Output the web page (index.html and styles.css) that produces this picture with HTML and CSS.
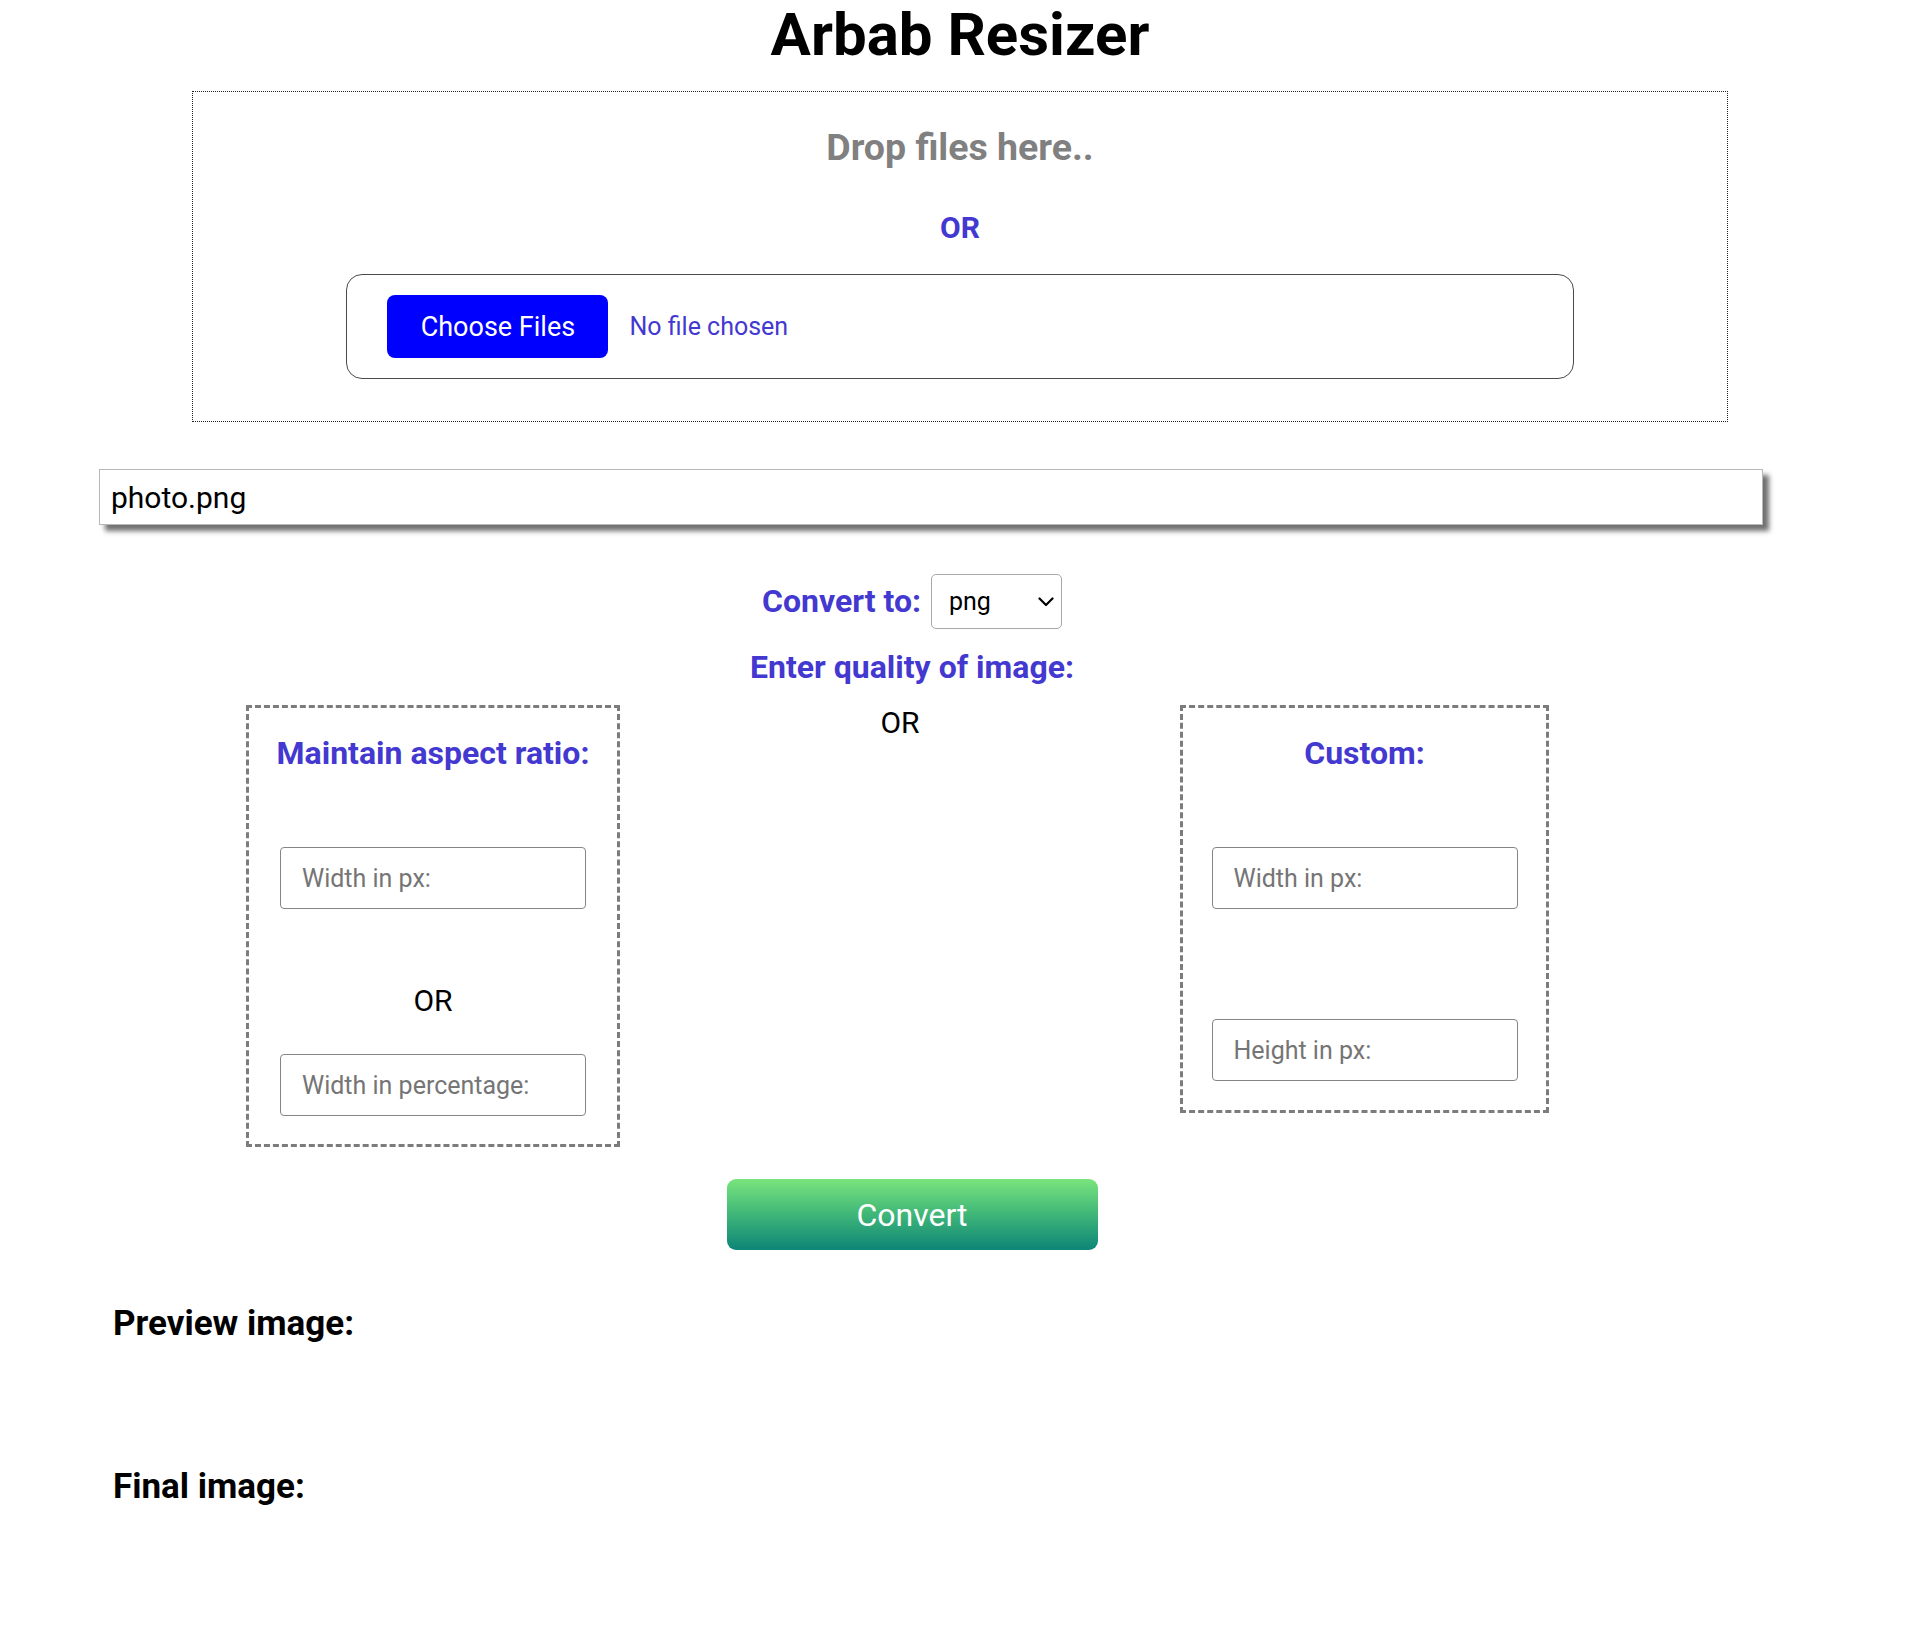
FILE: index.html
```html
<!DOCTYPE html>
<html lang="en">
<head>
<meta charset="utf-8">
<title>Arbab Resizer</title>
<link rel="stylesheet" href="styles.css">
</head>
<body>
<h1 class="title">Arbab Resizer</h1>

<div class="drop">
  <h2 class="drop-text">Drop files here..</h2>
  <p class="drop-or">OR</p>
  <div class="file-input">
    <span class="file-btn">Choose Files</span>
    <span class="file-status">No file chosen</span>
  </div>
</div>

<div class="filename">photo.png</div>

<div class="controls">
  <div class="convert-row">
    <label class="blue-label" for="fmt">Convert to:</label>
    <span class="select-wrap">
      <select id="fmt" class="fmt-select"><option>png</option><option>jpeg</option><option>webp</option></select>
      <svg class="chevron" width="16" height="10" viewBox="0 0 16 10" aria-hidden="true"><path d="M1.5 1.5 L8 8 L14.5 1.5" fill="none" stroke="#000" stroke-width="2.2" stroke-linecap="round" stroke-linejoin="round"/></svg>
    </span>
  </div>
  <div class="blue-label quality">Enter quality of image:</div>

  <div class="options">
    <div class="box box-left">
      <h3 class="box-title">Maintain aspect ratio:</h3>
      <input class="field field-first" type="text" placeholder="Width in px:">
      <p class="or or-box">OR</p>
      <input class="field field-pct" type="text" placeholder="Width in percentage:">
    </div>
    <div class="middle">
      <p class="or">OR</p>
    </div>
    <div class="box box-right">
      <h3 class="box-title">Custom:</h3>
      <input class="field field-first" type="text" placeholder="Width in px:">
      <input class="field field-height" type="text" placeholder="Height in px:">
    </div>
  </div>

  <button class="convert" type="button">Convert</button>
</div>

<section class="results">
  <h2 class="result-title">Preview image:</h2>
  <h2 class="result-title final">Final image:</h2>
</section>
</body>
</html>
```

FILE: styles.css
```css
* { box-sizing: border-box; }

html, body {
  margin: 0;
  padding: 0;
  background: #ffffff;
  font-family: Roboto, "Liberation Sans", Arial, sans-serif;
  color: #000;
}

.title {
  margin: 0;
  font-size: 60px;
  line-height: 70px;
  font-weight: 700;
  text-align: center;
}

.drop {
  width: 80%;
  margin: 21px auto 0;
  border: 1px dotted #1e1e1e;
  padding: 33px 0 42px;
  text-align: center;
}

.drop-text {
  margin: 0;
  font-size: 37.5px;
  line-height: 44px;
  font-weight: 700;
  color: #808080;
}

.drop-or {
  margin: 41px 0 0;
  font-size: 30px;
  line-height: 35px;
  font-weight: 700;
  color: #4338d0;
}

.file-input {
  width: 80%;
  margin: 29px auto 0;
  border: 1px solid #4a4a4a;
  border-radius: 16px;
  padding: 20px 40px;
  display: flex;
  align-items: center;
  gap: 21px;
  text-align: left;
}

.file-btn {
  display: inline-flex;
  align-items: center;
  justify-content: center;
  width: 221px;
  height: 63px;
  background: #0000ff;
  color: #fff;
  border-radius: 8px;
  font-size: 27px;
}

.file-status {
  font-size: 25px;
  color: #4338d0;
}

.filename {
  margin: 47px 0 0 99px;
  width: 1664px;
  height: 56px;
  border: 1px solid #b8b8b8;
  box-shadow: 6px 6px 5px #707070;
  padding: 0 11px;
  display: flex;
  align-items: center;
  font-size: 30px;
  color: #000;
}

.controls {
  margin-right: 96px;
  text-align: center;
}

.convert-row {
  margin-top: 49px;
  display: flex;
  justify-content: center;
  align-items: center;
  gap: 10px;
}

.blue-label {
  font-size: 32px;
  line-height: 35px;
  font-weight: 700;
  color: #4338d0;
}

.select-wrap {
  position: relative;
  display: inline-block;
  width: 131px;
  height: 55px;
}

.fmt-select {
  -webkit-appearance: none;
  appearance: none;
  width: 131px;
  height: 55px;
  font-family: Roboto, "Liberation Sans", Arial, sans-serif;
  font-size: 25px;
  color: #000;
  background: #fff;
  border: 1px solid #a8a8a8;
  border-radius: 5px;
  padding: 0 30px 0 17px;
}

.chevron {
  position: absolute;
  right: 8px;
  top: 23px;
  pointer-events: none;
}

.quality {
  margin-top: 21px;
}

.options {
  margin-top: 20px;
  display: flex;
  align-items: flex-start;
}

.box {
  border: 3px dashed #7c7c7c;
  padding: 28px 0 28px;
  display: flex;
  flex-direction: column;
  align-items: center;
}

.box-left {
  margin-left: 246px;
  width: 374px;
}

.box-right {
  width: 369px;
}

.middle {
  width: 560px;
}

.box-title {
  margin: 0;
  font-size: 32px;
  line-height: 35px;
  font-weight: 700;
  color: #4338d0;
}

.field {
  width: 306px;
  height: 62px;
  border: 1px solid #858585;
  border-radius: 4px;
  padding: 0 21px;
  font-family: Roboto, "Liberation Sans", Arial, sans-serif;
  font-size: 25px;
  color: #000;
  background: #fff;
}

.field::placeholder {
  color: #757575;
}

.field-first {
  margin-top: 76px;
}

.or {
  margin: 0;
  font-size: 30px;
  line-height: 33px;
  font-weight: 400;
  color: #000;
}

.or-box {
  margin-top: 75px;
}

.middle .or {
  margin-top: 1px;
}

.field-pct {
  margin-top: 37px;
}

.field-height {
  margin-top: 110px;
}

.box-right {
  padding-bottom: 29px;
}

.convert {
  display: block;
  margin: 32px auto 0;
  width: 371px;
  height: 71px;
  border: none;
  border-radius: 9px;
  background: linear-gradient(to bottom, #7ae47d 0%, #3fb678 50%, #0d8577 100%);
  color: #fff;
  font-family: Roboto, "Liberation Sans", Arial, sans-serif;
  font-size: 32px;
}

.results {
  padding-left: 113px;
  margin-top: 54px;
}

.result-title {
  margin: 0;
  font-size: 35px;
  line-height: 40px;
  font-weight: 700;
}

.result-title.final {
  margin-top: 123px;
}
```
